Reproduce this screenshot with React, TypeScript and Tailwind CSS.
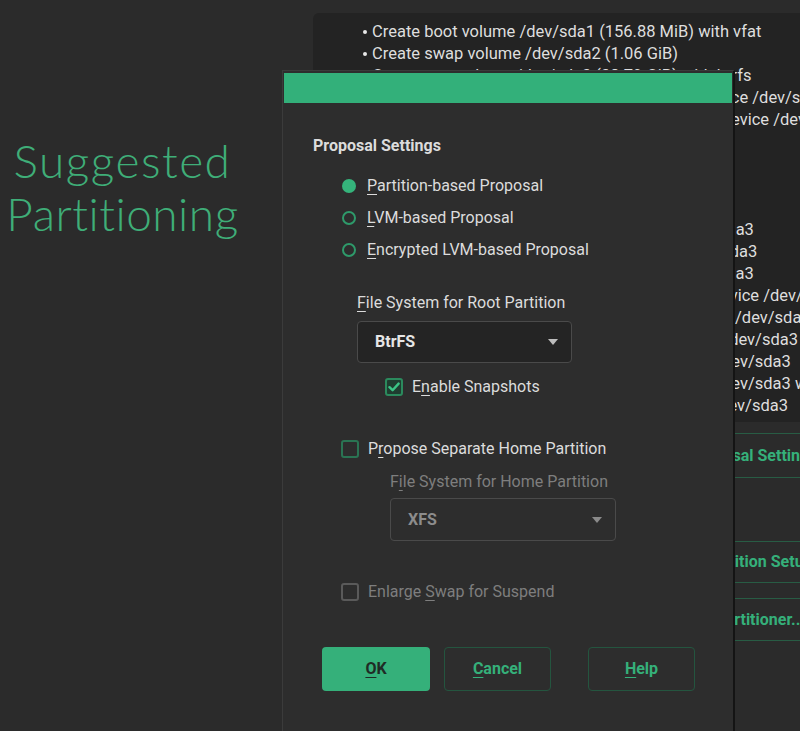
import type { ReactNode } from "react";

const summary = [
  "Create boot volume /dev/sda1 (156.88 MiB) with vfat",
  "Create swap volume /dev/sda2 (1.06 GiB)",
  "Create root volume /dev/sda3 (38.79 GiB) with btrfs",
  "Create subvolume @/boot/grub2/i386-pc on device /dev/sda3",
  "Create subvolume @/boot/grub2/x86_64-efi on device /dev/sda3",
  "Create subvolume @/home on device /dev/sda3",
  "Create subvolume @/opt on device /dev/sda3",
  "Create subvolume @/srv on device /dev/sda3",
  "Create subvolume @/tmp on device /dev/sda3",
  "Create subvolume @/var/spool on device /dev/sda3",
  "Create subvolume @/var/cache on device /dev/sda3",
  "Create subvolume @/var/crash on device /dev/sda3",
  "Create subvolume @/var/lib/libvirt/images on device /dev/sda3",
  "Create subvolume @/var/lib/mailman3 on device /dev/sda3",
  "Create subvolume @/var/lib/mariadb on device /dev/sda3",
  "Create subvolume @/var/lib/mysqld on device /dev/sda3",
  "Create subvolume @/var/lib/mysqld on device /dev/sda3 with option 'no copy on write'",
  "Create subvolume @/var/lib/named on device /dev/sda3",
];

function Key({ children }: { children: ReactNode }) {
  return <u className="underline underline-offset-[3px] decoration-1">{children}</u>;
}

function Radio({ checked }: { checked?: boolean }) {
  return checked ? (
    <span className="w-[14px] h-[14px] rounded-full bg-[#35b47b] shrink-0" />
  ) : (
    <span className="w-[14px] h-[14px] rounded-full border-2 border-[#2e9a6a] shrink-0" />
  );
}

function Checkbox({ checked, disabled }: { checked?: boolean; disabled?: boolean }) {
  if (checked) {
    return (
      <span className="w-[18px] h-[18px] rounded-[3px] border-2 border-[#2b8a5d] bg-[#1f3d30] shrink-0 flex items-center justify-center">
        <svg width="12" height="10" viewBox="0 0 12 10">
          <path d="M1.5 5.2 L4.6 8.2 L10.6 1.6" fill="none" stroke="#3cc486" strokeWidth="2.4" strokeLinecap="round" strokeLinejoin="round" />
        </svg>
      </span>
    );
  }
  return (
    <span
      className={
        disabled
          ? "w-[18px] h-[18px] rounded-[3px] border-2 border-[#5a5a5a] shrink-0"
          : "w-[18px] h-[18px] rounded-[3px] border-2 border-[#2a7453] shrink-0"
      }
    />
  );
}

function Caret({ dim }: { dim?: boolean }) {
  return (
    <svg width="10" height="6" viewBox="0 0 10 6">
      <path d="M0 0 H10 L5 6 Z" fill={dim ? "#8a8a8a" : "#bdbdbd"} />
    </svg>
  );
}

export default function App() {
  return (
    <div
      className="relative w-[800px] h-[731px] overflow-hidden bg-[#2b2b2b] flex"
      style={{ fontFamily: "Roboto, 'Liberation Sans', sans-serif" }}
    >
      {/* page heading */}
      <div className="w-[245px] shrink-0 flex justify-center pt-[134px]">
        <h1
          className="text-center text-[46px] leading-[53px] font-light tracking-[0.5px] text-[#3fae78] whitespace-nowrap"
          style={{ fontFamily: "Lato, 'Open Sans', sans-serif" }}
        >
          <span className="tracking-[1.5px]">Suggested</span>
          <br />
          Partitioning
        </h1>
      </div>

      {/* proposal summary behind the dialog */}
      <div className="flex-1 pl-[68px] pt-[13px] flex flex-col">
        <div className="h-[409px] rounded-tl-[6px] bg-[#232323] pl-[50px] pt-[8px] overflow-hidden">
          <ul className="text-[16.5px] leading-[22px] text-[#dedede] whitespace-nowrap">
            {summary.map((line, i) => (
              <li key={i} className="flex items-center">
                <span className="w-[4px] h-[4px] rounded-full bg-[#e8e8e8] mr-[5px] shrink-0" />
                {line}
              </li>
            ))}
          </ul>
        </div>
        <div className="pl-[327px] pt-[11px] flex flex-col text-[16px] font-bold text-[#35b07a] whitespace-nowrap">
          <div className="h-[45px] border-y border-[#285c44] flex items-center pl-[18px]">Edit Proposal Settings</div>
          <div className="h-[42px] mt-[63px] border-y border-[#285c44] flex items-center pl-[13px]">Create Partition Setup...</div>
          <div className="h-[43px] mt-[15px] border-y border-[#285c44] flex items-center pl-[25px]">Expert Partitioner...</div>
        </div>
      </div>

      {/* proposal settings dialog */}
      <div className="absolute left-[282px] top-[70px] w-[453px] h-[680px] bg-[#2d2d2d] border-t border-l border-[#3b3b3b] border-r-2 border-r-[#141414] flex flex-col text-[16px] text-[#dcdcdc]">
        <div className="h-[30px] mx-[1px] mt-[2px] bg-[#33b07a]" />
        <div className="px-[30px] pt-[32px] flex flex-col">
          <div className="h-[22px] flex items-center font-bold">Proposal Settings</div>

          <div className="mt-[13px] pl-[29px] flex flex-col">
            <div className="h-[32px] flex items-center gap-[11px]">
              <Radio checked />
              <span><Key>P</Key>artition-based Proposal</span>
            </div>
            <div className="h-[32px] flex items-center gap-[11px]">
              <Radio />
              <span><Key>L</Key>VM-based Proposal</span>
            </div>
            <div className="h-[32px] flex items-center gap-[11px]">
              <Radio />
              <span><Key>E</Key>ncrypted LVM-based Proposal</span>
            </div>
          </div>

          <div className="mt-[26px] pl-[44px] flex flex-col">
            <div className="h-[22px] flex items-center"><span><Key>F</Key>ile System for Root Partition</span></div>
            <div className="mt-[7px] w-[215px] h-[42px] rounded-[4px] border border-[#4a4a4a] bg-[#242424] flex items-center justify-between pl-[17px] pr-[13px]">
              <span className="font-bold text-[#e6e6e6]">BtrFS</span>
              <Caret />
            </div>
            <div className="mt-[13px] pl-[28px] h-[22px] flex items-center gap-[9px]">
              <Checkbox checked />
              <span>E<Key>n</Key>able Snapshots</span>
            </div>
          </div>

          <div className="mt-[40px] pl-[28px] h-[22px] flex items-center gap-[9px]">
            <Checkbox />
            <span>P<Key>r</Key>opose Separate Home Partition</span>
          </div>

          <div className="mt-[11px] pl-[77px] flex flex-col text-[#7e7e7e]">
            <div className="h-[22px] flex items-center"><span>F<Key>i</Key>le System for Home Partition</span></div>
            <div className="mt-[5px] w-[226px] h-[43px] rounded-[4px] border border-[#4a4a4a] flex items-center justify-between pl-[17px] pr-[13px]">
              <span className="font-bold text-[#8c8c8c]">XFS</span>
              <Caret dim />
            </div>
          </div>

          <div className="mt-[40px] pl-[28px] h-[22px] flex items-center gap-[9px] text-[#7e7e7e]">
            <Checkbox disabled />
            <span>Enlarge <Key>S</Key>wap for Suspend</span>
          </div>

          <div className="mt-[44px] pl-[9px] flex items-center font-bold">
            <button className="w-[108px] h-[44px] rounded-[4px] bg-[#35b07a] text-[#1f2b25]">
              <Key>O</Key>K
            </button>
            <button className="ml-[14px] w-[107px] h-[44px] rounded-[4px] border border-[#24553f] text-[#35b07a]">
              <Key>C</Key>ancel
            </button>
            <button className="ml-[37px] w-[107px] h-[44px] rounded-[4px] border border-[#24553f] text-[#35b07a]">
              <Key>H</Key>elp
            </button>
          </div>
        </div>
      </div>
    </div>
  );
}
